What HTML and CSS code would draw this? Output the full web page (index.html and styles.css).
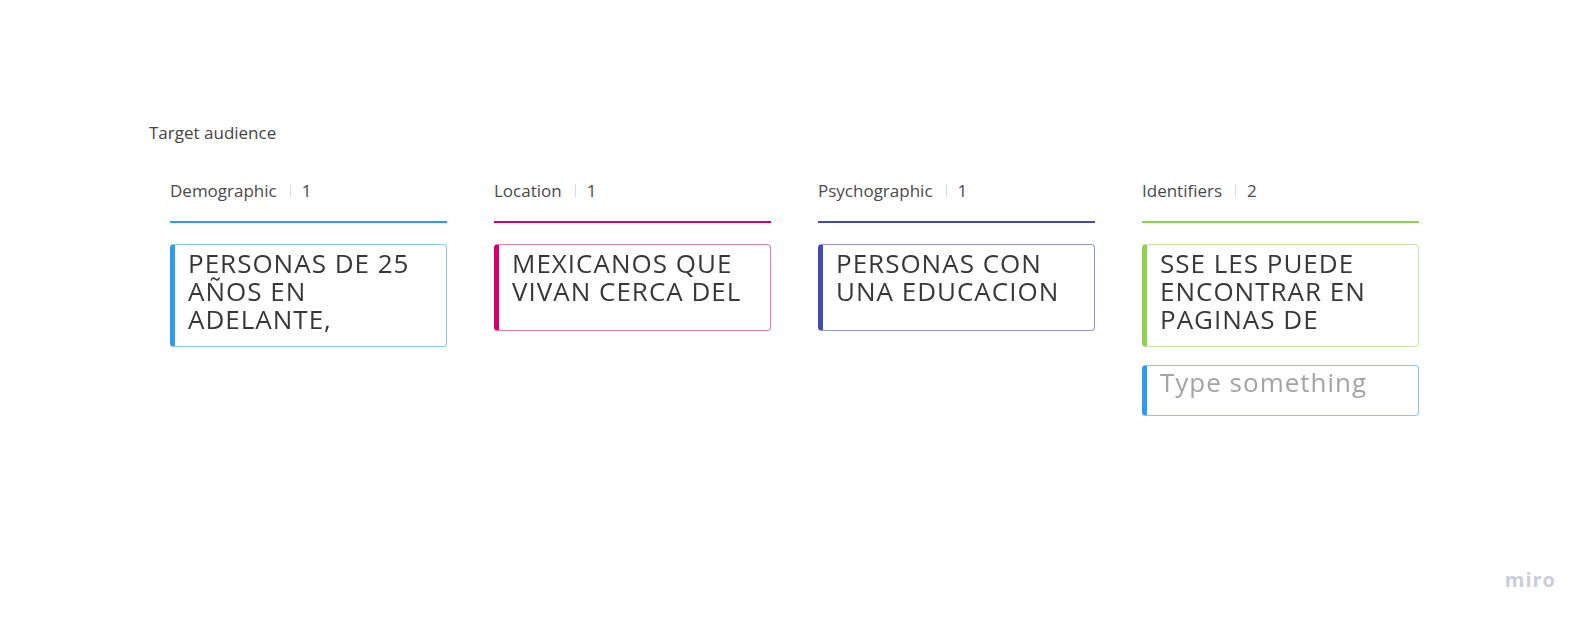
FILE: index.html
```html
<!DOCTYPE html>
<html lang="en">
<head>
<meta charset="utf-8">
<title>Target audience</title>
<link rel="stylesheet" href="styles.css">
</head>
<body>
<main class="board">
  <h1 class="board-title">Target audience</h1>
  <div class="columns">
    <section class="column column--blue">
      <header class="column-head"><span class="column-name">Demographic</span><span class="sep"></span><span class="count">1</span></header>
      <div class="cards">
        <div class="card"><p class="card-text">PERSONAS DE 25 AÑOS EN ADELANTE,</p></div>
      </div>
    </section>
    <section class="column column--pink">
      <header class="column-head"><span class="column-name">Location</span><span class="sep"></span><span class="count">1</span></header>
      <div class="cards">
        <div class="card"><p class="card-text">MEXICANOS QUE VIVAN CERCA DEL</p></div>
      </div>
    </section>
    <section class="column column--indigo">
      <header class="column-head"><span class="column-name">Psychographic</span><span class="sep"></span><span class="count">1</span></header>
      <div class="cards">
        <div class="card"><p class="card-text">PERSONAS CON UNA EDUCACION</p></div>
      </div>
    </section>
    <section class="column column--green">
      <header class="column-head"><span class="column-name">Identifiers</span><span class="sep"></span><span class="count">2</span></header>
      <div class="cards">
        <div class="card"><p class="card-text">SSE LES PUEDE ENCONTRAR EN PAGINAS DE</p></div>
        <div class="card card--input"><p class="card-text card-text--placeholder">Type something</p></div>
      </div>
    </section>
  </div>
</main>
<div class="logo">miro</div>
</body>
</html>
```

FILE: styles.css
```css
html, body {
  margin: 0;
  padding: 0;
  background: #ffffff;
}

body {
  width: 1593px;
  height: 627px;
  overflow: hidden;
  position: relative;
  font-family: "Open Sans", "Noto Sans", sans-serif;
}

.board {
  padding: 121px 0 0 149px;
}

.board-title {
  margin: 0;
  font-size: 17px;
  line-height: 24px;
  font-weight: 400;
  color: #444444;
}

.columns {
  display: flex;
  gap: 47px;
  margin: 33px 0 0 21px;
}

.column {
  width: 277px;
  display: flex;
  flex-direction: column;
}

.column-head {
  display: flex;
  align-items: center;
  height: 24px;
  font-size: 17px;
  color: #4a4a4a;
  padding-bottom: 19px;
  border-bottom: 2px solid var(--accent);
  margin-bottom: 21px;
}

.sep {
  width: 1px;
  height: 13px;
  background: #dcdcdc;
  margin: 0 11px 0 13px;
}

.cards {
  display: flex;
  flex-direction: column;
  gap: 18px;
}

.card {
  box-sizing: border-box;
  min-height: 87px;
  padding: 4px 26px 13px 13px;
  border: 1px solid var(--soft);
  border-left: 5px solid var(--accent);
  border-radius: 4px;
  background: #ffffff;
}

.card--input {
  min-height: 51px;
  padding-top: 2px;
  padding-bottom: 0;
  --accent: #2d9bf0;
  --soft: #8cc6f5;
}

.card-text {
  margin: 0;
  font-size: 26px;
  line-height: 28px;
  letter-spacing: 1px;
  color: #383838;
  filter: blur(0.7px);
}

.card-text--placeholder {
  color: #a4a4a4;
}

.column--blue { --accent: #2d9bf0; --soft: #8cc6f5; }
.column--pink { --accent: #d5006d; --soft: #e57aae; }
.column--indigo { --accent: #414bb2; --soft: #9096d2; }
.column--green { --accent: #8fd14f; --soft: #c4e6a4; }

.logo {
  position: absolute;
  right: 37px;
  bottom: 34px;
  font-family: "Open Sans", "Noto Sans", sans-serif;
  font-weight: 700;
  font-size: 20px;
  letter-spacing: 1px;
  color: #cacdda;
}
```
